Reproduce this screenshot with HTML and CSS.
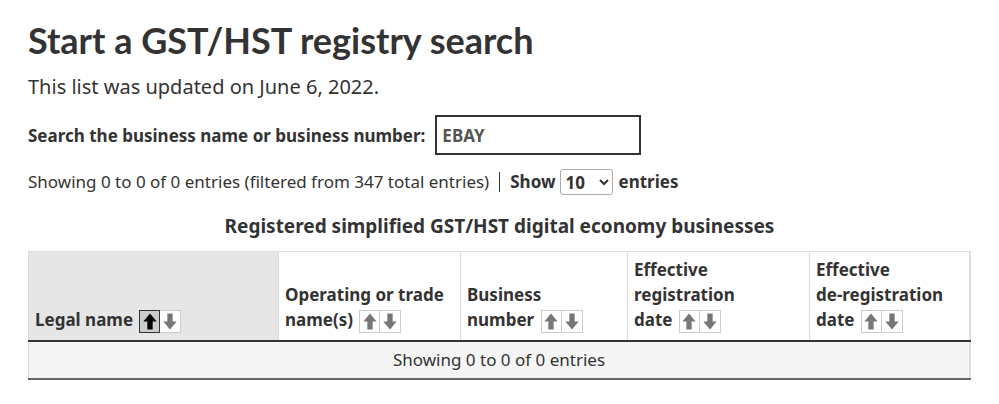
FILE: index.html
```html
<!DOCTYPE html>
<html lang="en">
<head>
    <meta charset="UTF-8">
    <meta name="viewport" content="width=device-width, initial-scale=1.0">
    <title>Start a GST/HST registry search</title>
    <link rel="stylesheet" href="styles.css">
</head>
<body>
    <div class="container">
        <h1>Start a GST/HST registry search</h1>
        <p class="updated">This list was updated on June 6, 2022.</p>

        <div class="search">
            <label for="q">Search the business name or business number:</label>
            <input type="text" id="q" value="EBAY">
        </div>

        <div class="info">
            <span>Showing 0 to 0 of 0 entries (filtered from 347 total entries)</span>
            <span class="sep"></span>
            <label for="len">Show</label>
            <select id="len">
                <option>10</option>
                <option>25</option>
                <option>50</option>
                <option>100</option>
            </select>
            <b>entries</b>
        </div>

        <table>
            <caption>Registered simplified GST/HST digital economy businesses</caption>
            <thead>
                <tr>
                    <th class="sorted col1">Legal <span class="last">name <span class="sort"><button class="on"><svg viewBox="0 0 12 14"><path d="M6 1 L11 7 H8 V13 H4 V7 H1 Z"/></svg></button><button><svg viewBox="0 0 12 14"><path d="M6 13 L11 7 H8 V1 H4 V7 H1 Z"/></svg></button></span></span></th>
                    <th class="col2">Operating or trade <span class="last">name(s) <span class="sort"><button><svg viewBox="0 0 12 14"><path d="M6 1 L11 7 H8 V13 H4 V7 H1 Z"/></svg></button><button><svg viewBox="0 0 12 14"><path d="M6 13 L11 7 H8 V1 H4 V7 H1 Z"/></svg></button></span></span></th>
                    <th class="col3">Business <span class="last">number <span class="sort"><button><svg viewBox="0 0 12 14"><path d="M6 1 L11 7 H8 V13 H4 V7 H1 Z"/></svg></button><button><svg viewBox="0 0 12 14"><path d="M6 13 L11 7 H8 V1 H4 V7 H1 Z"/></svg></button></span></span></th>
                    <th class="col4">Effective registration <span class="last">date <span class="sort"><button><svg viewBox="0 0 12 14"><path d="M6 1 L11 7 H8 V13 H4 V7 H1 Z"/></svg></button><button><svg viewBox="0 0 12 14"><path d="M6 13 L11 7 H8 V1 H4 V7 H1 Z"/></svg></button></span></span></th>
                    <th class="col5">Effective de&#8209;registration <span class="last">date <span class="sort"><button><svg viewBox="0 0 12 14"><path d="M6 1 L11 7 H8 V13 H4 V7 H1 Z"/></svg></button><button><svg viewBox="0 0 12 14"><path d="M6 13 L11 7 H8 V1 H4 V7 H1 Z"/></svg></button></span></span></th>
                </tr>
            </thead>
            <tbody>
                <tr>
                    <td colspan="5" class="empty">Showing 0 to 0 of 0 entries</td>
                </tr>
            </tbody>
        </table>
    </div>
</body>
</html>
```

FILE: styles.css
```css
body {
    font-family: 'Noto Sans', sans-serif;
    color: #333;
    margin: 0;
    padding: 0;
    background: #fff;
}

.container {
    padding: 0 28px;
}

h1 {
    font-family: 'Lato', sans-serif;
    font-weight: bold;
    font-size: 36px;
    line-height: 40px;
    margin: 20px 0 0;
}

.updated {
    font-size: 20px;
    line-height: 30px;
    margin: 12px 0 0;
}

.search {
    display: flex;
    align-items: center;
    gap: 10px;
    margin-top: 13px;
}

.search label {
    font-weight: bold;
    font-size: 17px;
}

.search input {
    width: 206px;
    height: 40px;
    box-sizing: border-box;
    border: 2px solid #333;
    padding: 4px 5px;
    font-family: 'Noto Sans', sans-serif;
    font-weight: bold;
    font-size: 17px;
    color: #555;
}

.info {
    display: flex;
    align-items: center;
    font-size: 17px;
    margin-top: 13px;
    height: 27px;
}

.info .sep {
    width: 1px;
    height: 20px;
    background: #333;
    margin: 0 10px;
}

.info label, .info b {
    font-weight: bold;
}

.info select {
    margin: 0 5px;
    height: 26px;
    width: 53px;
    font-family: 'Noto Sans', sans-serif;
    font-weight: bold;
    font-size: 17px;
    color: #333;
    border: 1px solid #aaa;
    border-radius: 3px;
    background: #fff;
}

table {
    width: 100%;
    border-collapse: collapse;
    margin-top: 9px;
    border-right: 2px solid #ddd;
    border-bottom: 2px solid #666;
}

caption {
    font-weight: bold;
    font-size: 19px;
    line-height: 28px;
    padding: 8px 0 11px;
}

th {
    text-align: left;
    vertical-align: bottom;
    font-size: 17px;
    line-height: 25px;
    padding: 5px 6px 7px;
    border: 1px solid #ddd;
    border-bottom: 2px solid #333;
}

th.sorted {
    background: #e6e6e6;
}

th .last {
    white-space: nowrap;
}

.col1 { width: 237px; }
.col2 { width: 169px; }
.col3 { width: 154px; }
.col4 { width: 169px; }

.sort {
    display: inline-flex;
    vertical-align: -5px;
    margin-left: 2px;
}

.sort button {
    width: 21px;
    height: 23px;
    padding: 0;
    margin: 0;
    background: #fff;
    border: 1px solid #ccc;
    display: flex;
    align-items: center;
    justify-content: center;
}

.sort button + button {
    border-left: none;
}

.sort button svg {
    width: 16px;
    height: 19px;
    fill: #777;
}

.sort button.on {
    background: #ccc;
    border: 1px solid #333;
}

.sort button.on svg {
    fill: #000;
}

td.empty {
    text-align: center;
    background: #f5f5f5;
    font-size: 17px;
    line-height: 25px;
    padding: 5px 6px 6px;
    border-left: 1px solid #ddd;
}
```
